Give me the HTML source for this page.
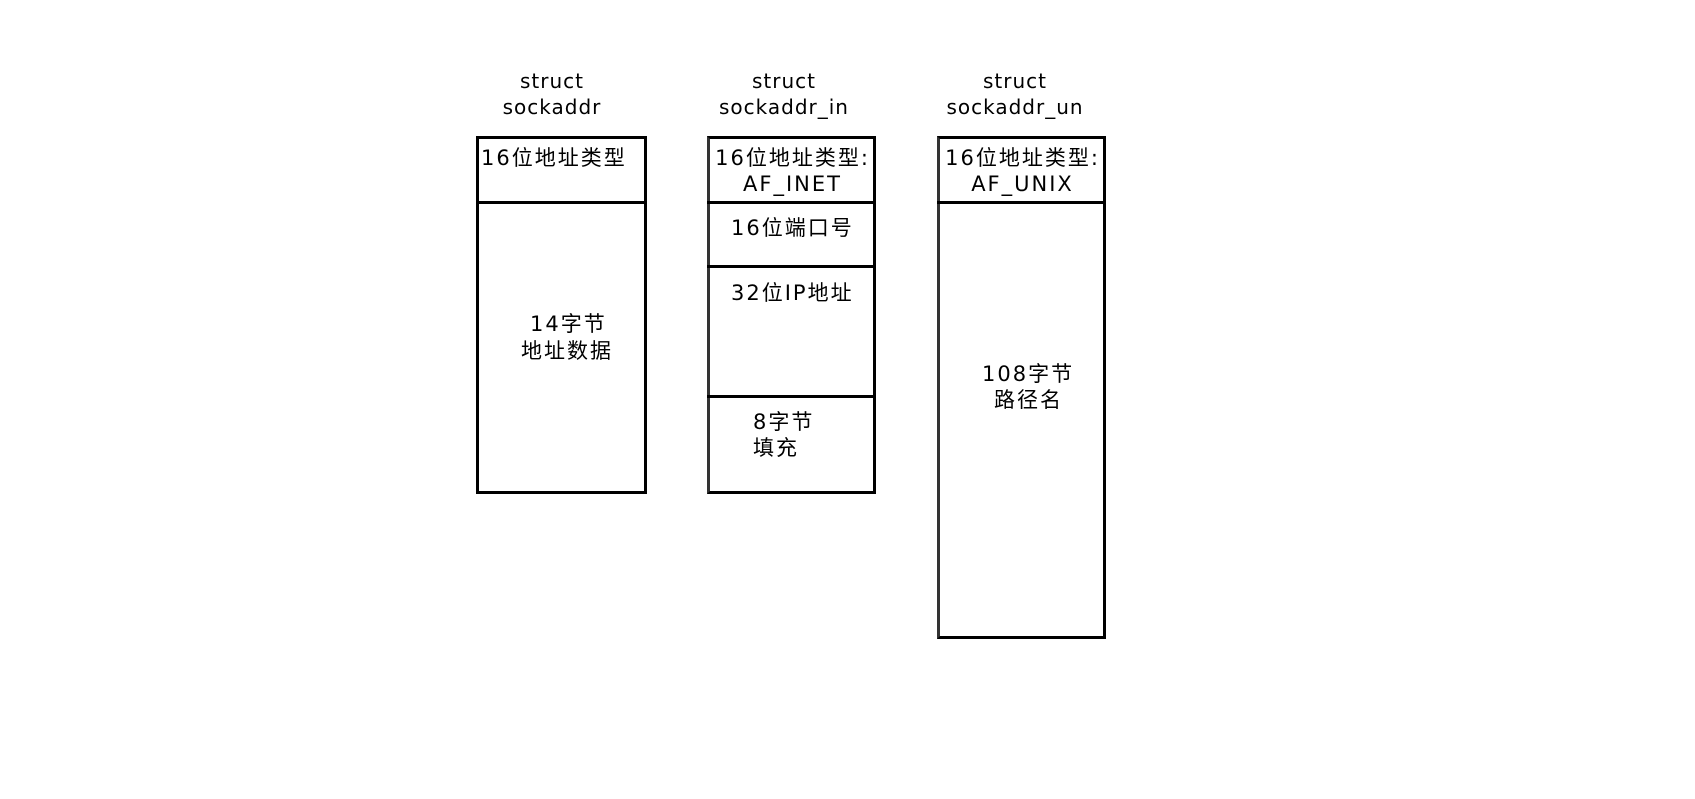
<!DOCTYPE html>
<html><head><meta charset="utf-8"><style>
body{margin:0;width:1695px;height:799px;background:#fff;position:relative;overflow:hidden;font-family:"DejaVu Sans","Noto Sans CJK SC",sans-serif;font-size:20px;color:#000;letter-spacing:1px}
.b{position:absolute;border:3px solid #000;box-sizing:border-box}
.h{position:absolute;height:3px;background:#000}
.t{position:absolute;line-height:26px;white-space:nowrap}
.k{letter-spacing:2px;font-size:21px}
.c{text-align:center}
</style></head><body>
<div class="t c" style="left:452px;width:200px;top:68px">struct<br>sockaddr</div>
<div class="t c" style="left:684px;width:200px;top:68px">struct<br>sockaddr_in</div>
<div class="t c" style="left:915px;width:200px;top:68px">struct<br>sockaddr_un</div>

<div class="b" style="left:476px;top:136px;width:171px;height:358px"></div>
<div class="h" style="left:476px;top:201px;width:171px"></div>
<div class="t k" style="left:481px;top:145px">16位地址类型</div>
<div class="t k" style="left:530px;top:311px">14字节</div>
<div class="t k" style="left:521px;top:338px">地址数据</div>

<div class="b" style="left:707px;top:136px;width:169px;height:358px;border-left-color:#333"></div>
<div class="h" style="left:707px;top:201px;width:169px"></div>
<div class="h" style="left:707px;top:265px;width:169px"></div>
<div class="h" style="left:707px;top:395px;width:169px"></div>
<div class="t c k" style="left:707px;width:171px;top:145px">16位地址类型:<br>AF_INET</div>
<div class="t k" style="left:731px;top:215px">16位端口号</div>
<div class="t k" style="left:731px;top:280px">32位IP地址</div>
<div class="t k" style="left:753px;top:409px">8字节</div>
<div class="t k" style="left:753px;top:435px">填充</div>

<div class="b" style="left:937px;top:136px;width:169px;height:503px;border-left-color:#333"></div>
<div class="h" style="left:937px;top:201px;width:169px"></div>
<div class="t c k" style="left:937px;width:171px;top:145px">16位地址类型:<br>AF_UNIX</div>
<div class="t k" style="left:982px;top:361px">108字节</div>
<div class="t k" style="left:994px;top:387px">路径名</div>
</body></html>
